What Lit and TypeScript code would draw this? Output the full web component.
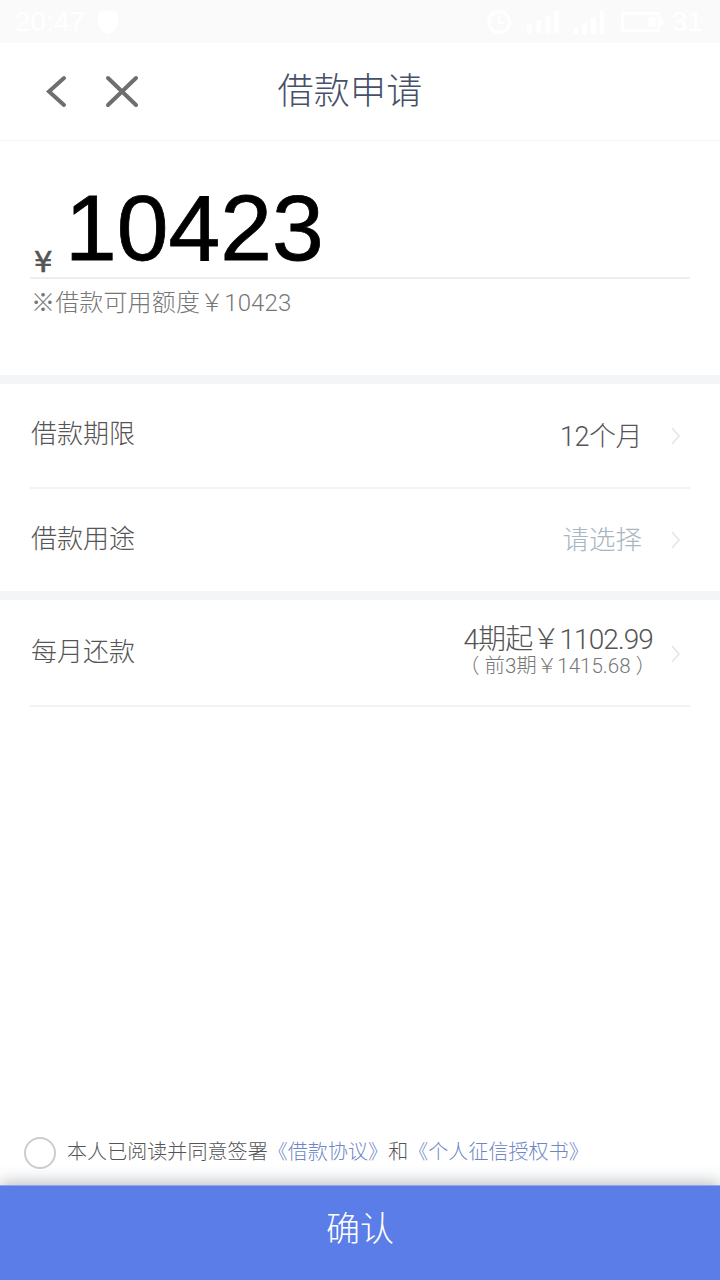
import { css, html, LitElement, svg } from "lit";
import { customElement } from "lit/decorators.js";

const chevron = svg`<path d="M2 2l7 8-7 8" fill="none" stroke="#e3e5e8" stroke-width="1.6"/>`;

@customElement("app-root")
class AppRoot extends LitElement {
  renderArrow() {
    return html`<svg class="arrow" width="11" height="20" viewBox="0 0 11 20">${chevron}</svg>`;
  }

  render() {
    return html`
      <div class="status">
        <div class="status-left">
          <span>20:47</span>
          <svg width="22" height="26" viewBox="0 0 22 26">
            <path d="M11 1l10 3v10c0 5-5 9-10 11C6 23 1 19 1 14V4z" fill="#fff"/>
          </svg>
        </div>
        <div class="status-right">
          <svg width="26" height="26" viewBox="0 0 26 26" fill="none" stroke="#fff" stroke-width="3">
            <circle cx="13" cy="13" r="10.5"/>
            <path d="M13 7v7h5" stroke-width="2"/>
          </svg>
          <svg width="32" height="24" viewBox="0 0 34 24" fill="#fff">
            <path d="M0 15h5v9H0zM10 10h5v14h-5zM20 5h5v19h-5zM29 0h5v24h-5z"/>
          </svg>
          <svg width="30" height="24" viewBox="0 0 30 24" fill="#fff">
            <path d="M0 18h4v6H0zM8 13h5v11H8zM17 7h5v17h-5zM26 1h4v23h-4z"/>
          </svg>
          <svg class="battery" width="42" height="24" viewBox="0 0 46 24" fill="none" stroke="#fff" stroke-width="3">
            <rect x="1.5" y="2.5" width="40" height="19"/>
            <path d="M30 7h8v10h-8z" fill="#fff" stroke="none"/>
            <path d="M44.5 8v8"/>
          </svg>
          <span class="level">31</span>
        </div>
      </div>

      <header class="nav">
        <div class="nav-icons">
          <svg width="24" height="36" viewBox="0 0 24 36" fill="none" stroke="#6e6e6e" stroke-width="4" stroke-linecap="round">
            <path d="M20 5L5 18.5l15 13.5"/>
          </svg>
          <svg width="36" height="36" viewBox="0 0 36 36" fill="none" stroke="#6e6e6e" stroke-width="4" stroke-linecap="round">
            <path d="M4 5l28 27M32 5L4 32"/>
          </svg>
        </div>
        <div class="title">借款申请</div>
      </header>

      <section class="amount">
        <div class="amount-line">
          <span class="yen">¥</span>
          <span class="value">10423</span>
        </div>
        <div class="limit">※借款可用额度￥10423</div>
      </section>

      <div class="group">
        <div class="row">
          <span class="label">借款期限</span>
          <span class="val">12个月</span>
          ${this.renderArrow()}
        </div>
        <div class="row second">
          <span class="label">借款用途</span>
          <span class="val placeholder">请选择</span>
          ${this.renderArrow()}
        </div>
      </div>

      <div class="group last">
        <div class="row third">
          <span class="label">每月还款</span>
          <div class="repay">
            <div class="repay-main">4期起￥1102.99</div>
            <div class="repay-sub">（ 前3期￥1415.68 ）</div>
          </div>
          ${this.renderArrow()}
        </div>
      </div>

      <div class="footer">
        <div class="agree">
          <span class="check"></span>
          <span class="terms">本人已阅读并同意签署<a>《借款协议》</a>和<a>《个人征信授权书》</a></span>
        </div>
        <div class="confirm">确认</div>
      </div>
    `;
  }

  static styles = css`
    :host {
      display: flex;
      flex-direction: column;
      height: 1280px;
      background: #fff;
      color: #555;
      font-family: Roboto, "Noto Sans CJK SC", sans-serif;
      font-weight: 300;
      overflow: hidden;
    }
    .status {
      height: 43px;
      background: #fafafa;
      color: #fff;
      display: flex;
      justify-content: space-between;
      align-items: center;
      padding: 0 17px 0 15px;
      font-size: 28px;
      box-sizing: border-box;
      font-family: "Liberation Sans", sans-serif;
    }
    .status-left {
      display: flex;
      align-items: center;
      gap: 12px;
    }
    .status-right {
      display: flex;
      align-items: center;
      gap: 15px;
    }
    .battery {
      margin-left: 2px;
    }
    .level {
      margin-left: -6px;
    }
    .nav {
      height: 97px;
      border-bottom: 1px solid #f3f3f3;
      position: relative;
      display: flex;
      align-items: center;
      justify-content: center;
    }
    .nav-icons {
      position: absolute;
      left: 44px;
      top: 30px;
      display: flex;
      gap: 36px;
    }
    .title {
      font-size: 36px;
      letter-spacing: 0.3px;
      color: #475069;
      margin: 0 20px 8px 0;
    }
    .amount {
      height: 243px;
      box-sizing: border-box;
      padding: 0 30px;
      border-bottom: 9px solid #f4f5f7;
    }
    .amount-line {
      height: 138px;
      border-bottom: 2px solid #eeeeee;
      display: flex;
      align-items: flex-end;
      box-sizing: border-box;
    }
    .yen {
      font-family: "DejaVu Sans", sans-serif;
      font-size: 29px;
      font-weight: 400;
      -webkit-text-stroke: 0.7px #555;
      color: #555;
      width: 35px;
      padding-left: 4px;
      box-sizing: border-box;
      line-height: 30px;
    }
    .value {
      font-family: "Liberation Sans", sans-serif;
      font-size: 93px;
      color: #000;
      font-weight: 400;
      line-height: 98px;
      -webkit-text-stroke: 0.8px #000;
    }
    .limit {
      font-size: 24px;
      letter-spacing: 0.15px;
      color: #777;
      margin: 9px 0 0 1px;
      line-height: 30px;
    }
    .group {
      border-bottom: 9px solid #f4f5f7;
    }
    .group.last {
      border-bottom: 0;
    }
    .row {
      height: 105px;
      margin: 0 30px;
      display: flex;
      align-items: center;
      box-sizing: border-box;
      border-bottom: 2px solid #f3f3f3;
    }
    .row.second {
      height: 102px;
      border-bottom: 0;
    }
    .row.third {
      height: 107px;
    }
    .label {
      font-size: 26px;
      color: #555;
      flex: 1;
      padding: 0 0 8px 1px;
    }
    .third .label {
      padding-bottom: 6px;
    }
    .third .arrow {
      margin-top: 3px;
    }
    .val {
      font-size: 27px;
      letter-spacing: -0.5px;
      color: #555;
      padding-bottom: 2px;
      margin-right: -2px;
    }
    .val.placeholder {
      font-size: 26.5px;
      letter-spacing: 0;
      color: #a9b6c0;
      padding-bottom: 6px;
      margin-right: -2px;
    }
    .arrow {
      margin-left: 30px;
      margin-right: 9px;
    }
    .repay {
      text-align: right;
      margin-right: -13px;
      padding-bottom: 2px;
    }
    .repay-main {
      font-size: 28px;
      line-height: 28px;
      color: #555;
      letter-spacing: -0.9px;
    }
    .repay-sub {
      font-size: 20.5px;
      line-height: 24px;
      color: #777;
      margin-right: -3px;
    }
    .footer {
      margin-top: auto;
    }
    .agree {
      display: flex;
      align-items: center;
      gap: 11px;
      padding-left: 24px;
      height: 64px;
      box-sizing: border-box;
      font-size: 20px;
      letter-spacing: 0.07px;
      color: #555;
    }
    .agree a {
      color: #6d87c6;
    }
    .terms {
      margin-bottom: 5px;
    }
    .check {
      width: 32px;
      height: 32px;
      box-sizing: border-box;
      border: 2.5px solid #cccccc;
      border-radius: 50%;
    }
    .confirm {
      height: 95px;
      box-sizing: border-box;
      border-top: 1px solid #8fa6ee;
      background: #5a7de8;
      color: #fff;
      font-size: 34px;
      padding-bottom: 13px;
      box-shadow: 0 -4px 14px rgba(60, 65, 80, 0.3);
      display: flex;
      align-items: center;
      justify-content: center;
    }
  `;
}
